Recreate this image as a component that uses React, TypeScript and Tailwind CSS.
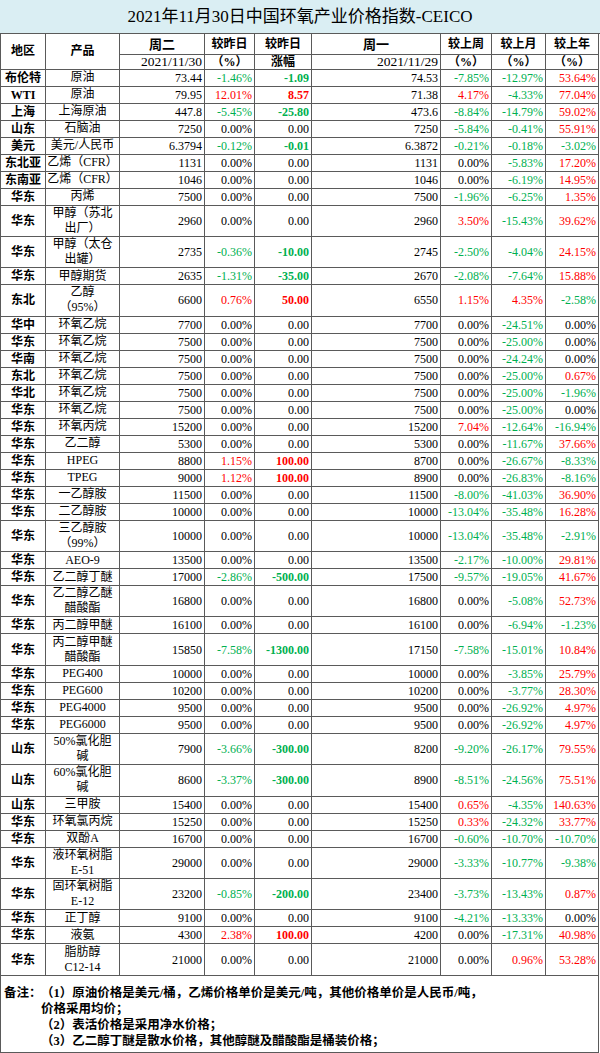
type Row = [string, string, string, string, string, string, string, string, string]

// region | product (lines split by '|') | 周二 | 较昨日% | 涨幅 | 周一 | 较上周 | 较上月 | 较上年
const rows: Row[] = [
  ['布伦特', '原油', '73.44', '-1.46%', '-1.09', '74.53', '-7.85%', '-12.97%', '53.64%'],
  ['WTI', '原油', '79.95', '12.01%', '8.57', '71.38', '4.17%', '-4.33%', '77.04%'],
  ['上海', '上海原油', '447.8', '-5.45%', '-25.80', '473.6', '-8.84%', '-14.79%', '59.02%'],
  ['山东', '石脑油', '7250', '0.00%', '0.00', '7250', '-5.84%', '-0.41%', '55.91%'],
  ['美元', '美元/人民币', '6.3794', '-0.12%', '-0.01', '6.3872', '-0.21%', '-0.18%', '-3.02%'],
  ['东北亚', '乙烯（CFR）', '1131', '0.00%', '0.00', '1131', '0.00%', '-5.83%', '17.20%'],
  ['东南亚', '乙烯（CFR）', '1046', '0.00%', '0.00', '1046', '0.00%', '-6.19%', '14.95%'],
  ['华东', '丙烯', '7500', '0.00%', '0.00', '7500', '-1.96%', '-6.25%', '1.35%'],
  ['华东', '甲醇（苏北|出厂）', '2960', '0.00%', '0.00', '2960', '3.50%', '-15.43%', '39.62%'],
  ['华东', '甲醇（太仓|出罐）', '2735', '-0.36%', '-10.00', '2745', '-2.50%', '-4.04%', '24.15%'],
  ['华东', '甲醇期货', '2635', '-1.31%', '-35.00', '2670', '-2.08%', '-7.64%', '15.88%'],
  ['东北', '乙醇|（95%）', '6600', '0.76%', '50.00', '6550', '1.15%', '4.35%', '-2.58%'],
  ['华中', '环氧乙烷', '7700', '0.00%', '0.00', '7700', '0.00%', '-24.51%', '0.00%'],
  ['华东', '环氧乙烷', '7500', '0.00%', '0.00', '7500', '0.00%', '-25.00%', '0.00%'],
  ['华南', '环氧乙烷', '7500', '0.00%', '0.00', '7500', '0.00%', '-24.24%', '0.00%'],
  ['东北', '环氧乙烷', '7500', '0.00%', '0.00', '7500', '0.00%', '-25.00%', '0.67%'],
  ['华北', '环氧乙烷', '7500', '0.00%', '0.00', '7500', '0.00%', '-25.00%', '-1.96%'],
  ['华东', '环氧乙烷', '7500', '0.00%', '0.00', '7500', '0.00%', '-25.00%', '0.00%'],
  ['华东', '环氧丙烷', '15200', '0.00%', '0.00', '15200', '7.04%', '-12.64%', '-16.94%'],
  ['华东', '乙二醇', '5300', '0.00%', '0.00', '5300', '0.00%', '-11.67%', '37.66%'],
  ['华东', 'HPEG', '8800', '1.15%', '100.00', '8700', '0.00%', '-26.67%', '-8.33%'],
  ['华东', 'TPEG', '9000', '1.12%', '100.00', '8900', '0.00%', '-26.83%', '-8.16%'],
  ['华东', '一乙醇胺', '11500', '0.00%', '0.00', '11500', '-8.00%', '-41.03%', '36.90%'],
  ['华东', '二乙醇胺', '10000', '0.00%', '0.00', '10000', '-13.04%', '-35.48%', '16.28%'],
  ['华东', '三乙醇胺|（99%）', '10000', '0.00%', '0.00', '10000', '-13.04%', '-35.48%', '-2.91%'],
  ['华东', 'AEO-9', '13500', '0.00%', '0.00', '13500', '-2.17%', '-10.00%', '29.81%'],
  ['华东', '乙二醇丁醚', '17000', '-2.86%', '-500.00', '17500', '-9.57%', '-19.05%', '41.67%'],
  ['华东', '乙二醇乙醚|醋酸酯', '16800', '0.00%', '0.00', '16800', '0.00%', '-5.08%', '52.73%'],
  ['华东', '丙二醇甲醚', '16100', '0.00%', '0.00', '16100', '0.00%', '-6.94%', '-1.23%'],
  ['华东', '丙二醇甲醚|醋酸酯', '15850', '-7.58%', '-1300.00', '17150', '-7.58%', '-15.01%', '10.84%'],
  ['华东', 'PEG400', '10000', '0.00%', '0.00', '10000', '0.00%', '-3.85%', '25.79%'],
  ['华东', 'PEG600', '10200', '0.00%', '0.00', '10200', '0.00%', '-3.77%', '28.30%'],
  ['华东', 'PEG4000', '9500', '0.00%', '0.00', '9500', '0.00%', '-26.92%', '4.97%'],
  ['华东', 'PEG6000', '9500', '0.00%', '0.00', '9500', '0.00%', '-26.92%', '4.97%'],
  ['山东', '50%氯化胆|碱', '7900', '-3.66%', '-300.00', '8200', '-9.20%', '-26.17%', '79.55%'],
  ['山东', '60%氯化胆|碱', '8600', '-3.37%', '-300.00', '8900', '-8.51%', '-24.56%', '75.51%'],
  ['山东', '三甲胺', '15400', '0.00%', '0.00', '15400', '0.65%', '-4.35%', '140.63%'],
  ['华东', '环氧氯丙烷', '15250', '0.00%', '0.00', '15250', '0.33%', '-24.32%', '33.77%'],
  ['华东', '双酚A', '16700', '0.00%', '0.00', '16700', '-0.60%', '-10.70%', '-10.70%'],
  ['华东', '液环氧树脂|E-51', '29000', '0.00%', '0.00', '29000', '-3.33%', '-10.77%', '-9.38%'],
  ['华东', '固环氧树脂|E-12', '23200', '-0.85%', '-200.00', '23400', '-3.73%', '-13.43%', '0.87%'],
  ['华东', '正丁醇', '9100', '0.00%', '0.00', '9100', '-4.21%', '-13.33%', '0.00%'],
  ['华东', '液氨', '4300', '2.38%', '100.00', '4200', '0.00%', '-17.31%', '40.98%'],
  ['华东', '脂肪醇|C12-14', '21000', '0.00%', '0.00', '21000', '0.00%', '0.96%', '53.28%'],
]

const isZero = (v: string) => v === '0.00' || v === '0.00%'

const tone = (v: string) => {
  if (v.startsWith('-')) return 'text-[#00b050]'
  if (isZero(v)) return 'text-black'
  return 'text-[#ff0000]'
}

const cell = 'border-r border-b border-[#5a5a5a] flex items-center'
const num = `${cell} justify-end pr-[2px] text-[12px]`

const DataRow = ({ r }: { r: Row }) => {
  const [region, product, p2, pct, chg, p1, wk, mo, yr] = r
  const lines = product.split('|')
  const tall = lines.length > 1

  return (
    <div
      className={`grid grid-cols-[45px_74px_85px_50px_57px_129px_51px_54px_53px] ${
        tall ? 'h-[31.4px]' : 'h-[17px]'
      }`}
    >
      <div className={`${cell} justify-center text-[12px] font-bold`}>{region}</div>
      <div className={`${cell} flex-col justify-center text-[12px] leading-[15px] whitespace-nowrap`}>
        {lines.map((l, i) => (
          <span key={i}>{l}</span>
        ))}
      </div>
      <div className={num}>{p2}</div>
      <div className={`${num} ${tone(pct)}`}>{pct}</div>
      <div className={`${num} ${isZero(chg) ? '' : 'font-bold'} ${tone(chg)}`}>{chg}</div>
      <div className={num}>{p1}</div>
      <div className={`${num} ${tone(wk)}`}>{wk}</div>
      <div className={`${num} ${tone(mo)}`}>{mo}</div>
      <div className={`${num} ${tone(yr)}`}>{yr}</div>
    </div>
  )
}

const head = 'border-r border-b border-[#5a5a5a] flex items-center justify-center font-bold text-[12px]'

const App = () => {
  return (
    <div className="w-[600px] h-[1053px] bg-white text-black font-['Liberation_Serif','Noto_Sans_CJK_SC',serif] leading-none">
      <div className="h-[34px] bg-[#daeef3] border-b border-[#5a5a5a] flex items-center justify-center text-[17px]">
        2021年11月30日中国环氧产业价格指数-CEICO
      </div>

      <div className="w-[599px] border-l border-[#5a5a5a]">
        <div className="grid grid-cols-[45px_74px_85px_50px_57px_129px_51px_54px_53px] grid-rows-[21px_14.5px]">
          <div className={`${head} row-span-2`}>地区</div>
          <div className={`${head} row-span-2`}>产品</div>
          <div className={`${head} text-[13px]`}>周二</div>
          <div className={head}>较昨日</div>
          <div className={head}>较昨日</div>
          <div className={`${head} text-[13px]`}>周一</div>
          <div className={head}>较上周</div>
          <div className={head}>较上月</div>
          <div className={head}>较上年</div>
          <div className="border-r border-b border-[#5a5a5a] flex items-center justify-end pr-[2px] text-[13.5px]">
            2021/11/30
          </div>
          <div className={head}>（%）</div>
          <div className={head}>涨幅</div>
          <div className="border-r border-b border-[#5a5a5a] flex items-center justify-end pr-[2px] text-[13.5px]">
            2021/11/29
          </div>
          <div className={head}>（%）</div>
          <div className={head}>（%）</div>
          <div className={head}>（%）</div>
        </div>

        {rows.map((r, i) => (
          <DataRow key={i} r={r} />
        ))}

        <div className="border-r border-b border-[#5a5a5a] pt-[9px] pb-[3px] pl-[3px] grid grid-cols-[37px_1fr] text-[12.5px] font-bold leading-[16px]">
          <span className="whitespace-nowrap">备注：</span>
          <div className="flex flex-col">
            <span className="whitespace-nowrap">（1）原油价格是美元/桶，乙烯价格单价是美元/吨，其他价格单价是人民币/吨，</span>
            <span>价格采用均价；</span>
            <span>（2）表活价格是采用净水价格；</span>
            <span>（3）乙二醇丁醚是散水价格，其他醇醚及醋酸酯是桶装价格；</span>
          </div>
        </div>
      </div>
    </div>
  )
}

export default App
